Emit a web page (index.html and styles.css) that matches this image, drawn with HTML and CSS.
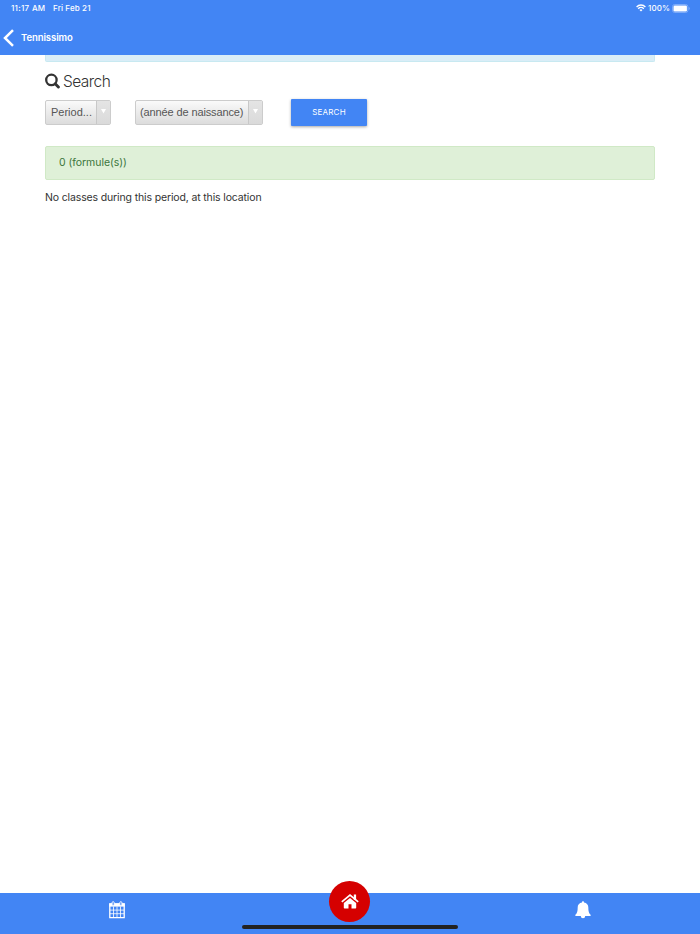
FILE: index.html
```html
<!DOCTYPE html>
<html lang="en">
<head>
    <meta charset="UTF-8">
    <meta name="viewport" content="width=device-width, initial-scale=1.0">
    <title>Tennissimo</title>
    <link rel="stylesheet" href="styles.css">
</head>
<body>
    <header class="header">
        <div class="status-bar">
            <span class="time">11:17 AM</span>
            <span class="date">Fri Feb 21</span>
            <svg class="wifi" width="10" height="8" viewBox="0 0 10 8" fill="none" stroke="#fff" stroke-width="1.4">
                <path d="M.6 2.9a6.2 6.2 0 0 1 8.8 0M2.2 4.7a4 4 0 0 1 5.6 0"/>
                <path d="M3.5 6a2.1 2.1 0 0 1 3 0L5 7.6z" fill="#fff" stroke="none"/>
            </svg>
            <span class="percent">100%</span>
            <svg class="battery" width="18" height="9" viewBox="0 0 18 9">
                <rect x=".5" y=".5" width="15.4" height="8" rx="2.2" fill="none" stroke="#8ab4fa" stroke-width=".8"/>
                <rect x="1.5" y="1.6" width="13.4" height="5.8" rx="1.2" fill="#fff"/>
                <path d="M16.8 3v3c1-.4 1-2.6 0-3z" fill="#a0c3fb"/>
            </svg>
        </div>
        <div class="nav-bar">
            <svg width="12" height="18" viewBox="0 0 12 18" fill="none" stroke="#fff" stroke-width="2.5">
                <path d="M10 1.2 2 9l8 7.8"/>
            </svg>
            <span class="nav-title">Tennissimo</span>
        </div>
    </header>

    <main class="content">
        <div class="alert-info"></div>
        <h1 class="title">
            <svg width="15" height="16" viewBox="0 0 15 16" fill="none" stroke="#333">
                <circle cx="6.4" cy="6.900" r="5.200" stroke-width="2.300"/>
                <path d="m10.200 10.800 3.200 3.200" stroke-width="2.900" stroke-linecap="round"/>
            </svg>
            <span class="title-text">Search</span>
        </h1>
        <div class="filters">
            <div class="select select-period">
                <span class="select-label">Period...</span>
                <span class="select-arrow"><svg width="5" height="5" viewBox="0 0 5 5"><path d="M0 0h5L2.5 4.5z" fill="#fff"/></svg></span>
            </div>
            <div class="select select-year">
                <span class="select-label">(année de naissance)</span>
                <span class="select-arrow"><svg width="5" height="5" viewBox="0 0 5 5"><path d="M0 0h5L2.5 4.5z" fill="#fff"/></svg></span>
            </div>
            <button class="btn-search">SEARCH</button>
        </div>
        <div class="alert-success">0 (formule(s))</div>
        <p class="message">No classes during this period, at this location</p>
    </main>

    <footer class="tab-bar">
        <a class="tab">
            <svg width="16" height="18" viewBox="0 0 16 18">
                <path d="M.8 2.800h14.400v13.800H.8z" fill="none" stroke="#fff" stroke-width="1.3"/>
                <path d="M.3 2.400h15.400v3.200H.3z" fill="#fff"/>
                <path d="M1 9.100h14M1 12.700h14M4.500 5.500v11M8 5.500v11M11.500 5.500v11" fill="none" stroke="#fff" stroke-width=".8"/>
                <rect x="3.1" y=".7" width="2.1" height="3.7" rx="1" fill="#4285f4" stroke="#fff" stroke-width=".9"/>
                <rect x="10.8" y=".7" width="2.1" height="3.7" rx="1" fill="#4285f4" stroke="#fff" stroke-width=".9"/>
            </svg>
        </a>
        <a class="tab tab-home">
            <span class="home-circle">
                <svg width="18" height="15" viewBox="0 0 18 15">
                    <path d="M9 3.900 2.800 9v4.800q0 .7.7.7h4v-4.200h3v4.200h4q.7 0 .7-.7V9z" fill="#fff"/>
                    <path d="M12.800.5h2.300v5.400h-2.300z" fill="#fff"/>
                    <path d="M.8 7.800 9 1.100l8.200 6.700" fill="none" stroke="#fff" stroke-width="1.700"/>
                </svg>
            </span>
        </a>
        <a class="tab">
            <svg width="16" height="18" viewBox="0 0 16 18" fill="#fff">
                <path d="M8 .3c.7 0 1.100.5 1 1.200 2.800.5 4.300 2.400 4.300 4.700 0 4 .6 6.200 2.500 7.800 0 .7-.4 1.100-1.100 1.100H1.300c-.7 0-1.100-.4-1.100-1.100C2.100 12.400 2.700 10.200 2.700 6.200c0-2.300 1.500-4.200 4.300-4.700C6.900.8 7.300.3 8 .3z"/>
                <path d="M5.800 15h4.400a2.200 2.200 0 0 1-4.400 0z"/>
            </svg>
        </a>
        <div class="home-indicator"></div>
    </footer>
</body>
</html>
```

FILE: styles.css
```css
* {
    box-sizing: border-box;
}

body {
    margin: 0;
    height: 100vh;
    display: flex;
    flex-direction: column;
    overflow: hidden;
    font-family: Inter, "Liberation Sans", sans-serif;
    font-size: 10.5px;
    color: #333;
    background-color: #fff;
}

.header {
    height: 55px;
    flex-shrink: 0;
    background-color: #4285f4;
    color: #fff;
}

.status-bar {
    display: flex;
    align-items: center;
    height: 16px;
    padding: 0 11px;
    font-size: 8px;
    font-weight: 500;
    white-space: nowrap;
}

.time {
    width: 42px;
    letter-spacing: 0.3px;
}

.date {
    letter-spacing: 0.13px;
}

.wifi {
    margin-left: auto;
    margin-right: 2px;
}

.percent {
    width: 24px;
    letter-spacing: 0.1px;
}

.battery {
    margin-right: -1px;
}

.nav-bar {
    display: flex;
    align-items: center;
    height: 43px;
    padding-left: 3px;
}

.nav-title {
    margin-left: 6px;
    padding-bottom: 1px;
    font-size: 9.5px;
    font-weight: 600;
    letter-spacing: -0.08px;
}

.content {
    flex: 1;
    padding: 0 45px;
}

/* bottom edge of the alert scrolled under the header */
.alert-info {
    height: 7px;
    background-color: #d9edf7;
    border: 1px solid #c8e9f1;
    border-top: none;
    border-radius: 0 0 2px 2px;
}

.title {
    display: flex;
    align-items: center;
    height: 20px;
    margin: 9px 0;
    font-size: 15.5px;
    font-weight: 300;
}

.title-text {
    margin-left: 3px;
    letter-spacing: -0.55px;
}

.filters {
    display: flex;
    align-items: center;
    height: 25px;
}

.select {
    display: flex;
    height: 25px;
    border: 1px solid #ccc;
    border-radius: 2px;
    background: linear-gradient(#fafafa, #dcdcdc);
    font-family: "Liberation Sans", Arial, sans-serif;
    font-size: 11px;
    line-height: 23px;
    color: #555;
    white-space: nowrap;
}

.select-period {
    width: 66px;
    margin-right: 24px;
}

.select-year {
    width: 128px;
    margin-right: 28px;
}

.select-label {
    flex: 1;
    padding-left: 5px;
}

.select-year .select-label {
    padding-left: 4px;
    letter-spacing: -0.12px;
}

.select-arrow {
    display: flex;
    justify-content: center;
    width: 14px;
    padding-top: 8px;
    border-left: 1px solid #c8c8c8;
    background: linear-gradient(#e4e4e4, #dadada);
}

.btn-search {
    width: 76px;
    height: 27px;
    flex-shrink: 0;
    padding: 0 0 2px;
    border: none;
    border-radius: 1px;
    background-color: #4285f4;
    box-shadow: 0 1px 3px rgba(0, 0, 0, 0.35);
    font-family: inherit;
    font-size: 8px;
    letter-spacing: 0.2px;
    color: #fff;
}

.alert-success {
    height: 34px;
    margin-top: 21px;
    padding-left: 13px;
    border: 1px solid #d0e9c6;
    border-radius: 2px;
    background-color: #dff0d8;
    line-height: 32px;
    letter-spacing: -0.05px;
    color: #3c763d;
}

.message {
    margin: 10px 0 0;
    line-height: 16px;
    letter-spacing: -0.14px;
}

.tab-bar {
    position: relative;
    display: flex;
    height: 41px;
    flex-shrink: 0;
    background-color: #4285f4;
}

.tab {
    display: flex;
    flex: 1;
    justify-content: center;
    padding-top: 8px;
}

.tab-home {
    padding-top: 0;
}

/* the home button sticks out above the bar */
.home-circle {
    display: flex;
    align-items: center;
    justify-content: center;
    width: 41px;
    height: 41px;
    margin-top: -12px;
    border-radius: 50%;
    background-color: #d50000;
}

.home-indicator {
    position: absolute;
    left: 50%;
    bottom: 5px;
    width: 216px;
    height: 4px;
    margin-left: -108px;
    border-radius: 2px;
    background-color: #222;
}
```
